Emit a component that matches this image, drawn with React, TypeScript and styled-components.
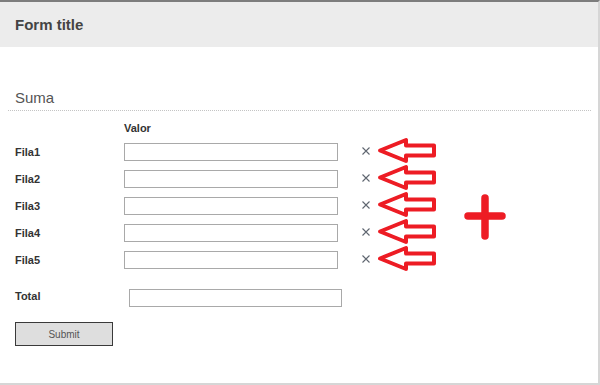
import React from "react";
import styled, { createGlobalStyle } from "styled-components";

const GlobalStyle = createGlobalStyle`
  html, body { margin: 0; padding: 0; background: #fff; }
  body { font-family: "Liberation Sans", Arial, sans-serif; }
  * { box-sizing: border-box; }
`;

const Frame = styled.div`
  width: 600px;
  height: 385px;
  border-top: 2px solid #7d7d7d;
  border-right: 2px solid #d6d6d6;
  border-bottom: 2px solid #d6d6d6;
  display: flex;
  flex-direction: column;
`;

const Header = styled.div`
  height: 45px;
  background: #ececec;
  display: flex;
  align-items: center;
  padding-left: 15px;
  font-size: 15px;
  font-weight: bold;
  color: #444;
`;

const Legend = styled.div`
  margin: 42px 7px 0 8px;
  padding: 0 0 4px 7px;
  font-size: 15px;
  line-height: 17px;
  color: #555;
  border-bottom: 1px dotted #c4c4c4;
`;

const Body = styled.div`
  position: relative;
  padding-left: 15px;
`;

const ColumnHead = styled.div`
  margin: 11px 0 0 109px;
  font-size: 11px;
  line-height: 13px;
  font-weight: bold;
  color: #333;
`;

const Rows = styled.div`
  margin-top: 8px;
  display: grid;
  grid-template-columns: 109px 214px 24px 8px 6px 62px;
  grid-auto-rows: 18px;
  row-gap: 9px;
  align-items: center;
`;

const Label = styled.label`
  font-size: 11px;
  font-weight: bold;
  color: #333;
`;

const TextBox = styled.input`
  width: 100%;
  height: 18px;
  margin: 0;
  padding: 0 3px;
  border: 1px solid #a9a9a9;
  background: #fff;
  font-family: inherit;
  font-size: 11px;
  outline: none;
`;

const RemoveIcon = styled.svg`
  grid-column: 4;
  display: block;
  margin-top: -2px;
`;

const ArrowIcon = styled.svg`
  grid-column: 6;
  display: block;
  margin-top: -3px;
`;

const PlusIcon = styled.svg`
  position: absolute;
  left: 464px;
  top: 83px;
`;

const TotalRow = styled.div`
  margin-top: 20px;
  display: grid;
  grid-template-columns: 114px 213px;
  align-items: start;
`;

const TotalLabel = styled(Label)`
  padding-top: 1px;
  line-height: 13px;
`;

const SubmitButton = styled.button`
  margin-top: 15px;
  width: 98px;
  height: 24px;
  background: #dedede;
  border: 1px solid #3a3a3a;
  font-family: inherit;
  font-size: 10px;
  color: #555;
  padding: 0;
  cursor: pointer;
`;

const RED = "#ed1c24";

const Remove = () => (
  <RemoveIcon width="8" height="8" viewBox="0 0 8 8">
    <path d="M0.5 0.5 L7.5 7.5 M7.5 0.5 L0.5 7.5" stroke="#5f6670" strokeWidth="1.1" fill="none" />
  </RemoveIcon>
);

const Arrow = () => (
  <ArrowIcon width="62" height="27" viewBox="0 0 62 27">
    <path
      d="M4 13.5 L30 3 L30 8.5 L58 8.5 L58 18.5 L30 18.5 L30 24 Z"
      fill="none"
      stroke={RED}
      strokeWidth="4"
      strokeLinejoin="round"
    />
  </ArrowIcon>
);

const rows = ["Fila1", "Fila2", "Fila3", "Fila4", "Fila5"];

export default function App() {
  return (
    <>
      <GlobalStyle />
      <Frame>
        <Header>Form title</Header>
        <Legend>Suma</Legend>
        <Body>
          <ColumnHead>Valor</ColumnHead>
          <Rows>
            {rows.map((r) => (
              <React.Fragment key={r}>
                <Label>{r}</Label>
                <TextBox type="text" />
                <span />
                <Remove />
                <span />
                <Arrow />
              </React.Fragment>
            ))}
          </Rows>
          <PlusIcon width="42" height="46" viewBox="0 0 42 46">
            <path
              d="M21 4 L21 42 M4 22 L38 22"
              stroke={RED}
              strokeWidth="7.5"
              strokeLinecap="round"
              fill="none"
            />
          </PlusIcon>
          <TotalRow>
            <TotalLabel>Total</TotalLabel>
            <TextBox type="text" />
          </TotalRow>
          <SubmitButton type="button">Submit</SubmitButton>
        </Body>
      </Frame>
    </>
  );
}
